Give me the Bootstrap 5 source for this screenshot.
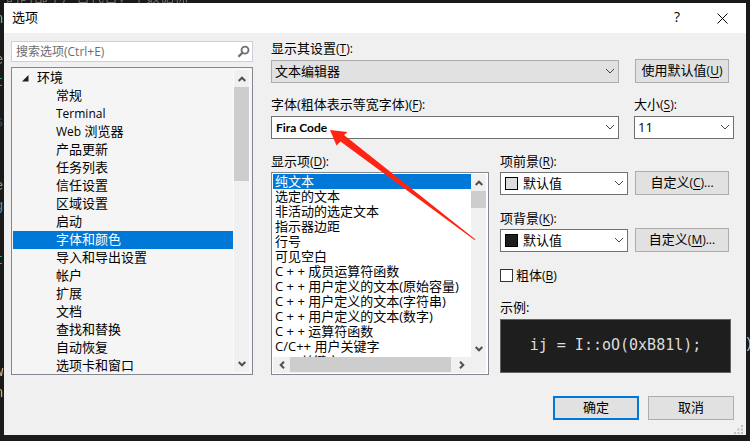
<!DOCTYPE html>
<html lang="zh-CN">
<head>
<meta charset="utf-8">
<meta name="viewport" content="width=device-width, initial-scale=1">
<title>选项</title>
<link href="https://cdn.jsdelivr.net/npm/bootstrap@5.3.0/dist/css/bootstrap.min.css" rel="stylesheet">
<style>
  :root { --ui: "Open Sans", "Noto Sans CJK SC", sans-serif; }
  body { background: #1a1a1a; font-family: var(--ui); font-size: 13px; line-height: 18px; color: #000; min-height: 100vh; overflow: hidden; }
  .latin { font-size: 12px; }
  .backdrop { font: 14px/18px "Liberation Mono", "Noto Sans CJK SC", monospace; color: #6e6e6e; overflow: hidden; }
  .backdrop span { position: absolute; left: -5px; white-space: nowrap; }
  .dialog { margin: 3px 4px 6px; background: #f0f0f0; }
  .titlebar { height: 30px; background: #fff; padding: 0 18px 2px 8px; }
  .titlebar h1 { font-size: 13px; line-height: 18px; margin: 0; font-weight: 400; }
  .titlebar button, .bar button { border: 0; background: transparent; padding: 0; line-height: 1; }
  .tools { gap: 37px; font-size: 14px; }
  .content-grid { display: grid; grid-template-columns: minmax(0, 242fr) minmax(0, 463fr); column-gap: 18px; padding: 8px 12px 0 7px; }
  .settings { margin-top: -2px; }
  .search { border: 1px solid #cccedb; background: #fff; height: 21px; padding: 0 2px 0 4px; }
  .search input { border: 0; background: transparent; padding: 0; outline: 0; font-size: 12px; line-height: 18px; color: #6d6d6d; }
  .search input::placeholder { color: #6d6d6d; opacity: 1; }
  .tree { border: 1px solid #828790; background: #f5f5f5; margin-top: 5px; height: 308px; padding: 1px 2px 1px 1px; }
  .tree ul, .items ul { min-width: 0; overflow: hidden; margin: 0; padding: 0; list-style: none; }
  .tree li { height: 18px; line-height: 16px; padding-left: 43px; white-space: nowrap; }
  .tree li.parent { padding-left: 9px; }
  .tree li.parent svg { margin-right: 8px; }
  .tree li.active, .items li.active { background: #0078d7; color: #fff; }
  .bar { width: 17px; background: #f0f0f0; border: 1px solid #fbfbfb; flex: none; }
  .bar button, .hbar button { width: 15px; height: 17px; display: grid; place-items: center; flex: none; }
  .thumb { background: #cdcdcd; }
  .tree .thumb { height: 94px; }
  .items .bar { border: 0; width: 15px; }
  .items .bar .thumb { height: 17px; }
  .field-label { display: block; margin: 0; height: 18px; }
  .field-label u, .push u { text-underline-offset: 2px; }
  .combo { position: relative; }
  .combo select { appearance: none; width: 100%; height: 23px; display: block; border: 1px solid #707070; border-radius: 0; background: #fff; padding: 0 20px 2px 3px; line-height: 18px; color: #000; font-size: 13px; }
  .combo.muted-combo select { border-color: #adadad; background: #e1e1e1; }
  .combo select.font-name { font: 700 12px/18px Lato, sans-serif; padding: 0 20px 0 4px; }
  .combo svg { position: absolute; right: 4px; top: 8px; pointer-events: none; }
  .combo.with-swatch select { padding-left: 22px; }
  .swatch { position: absolute; left: 5px; top: 5px; width: 13px; height: 13px; border: 1px solid #000; background: #dcdcdc; pointer-events: none; }
  .swatch.dark { background: #1e1e1e; }
  .push { border: 1px solid #adadad; border-radius: 0; background: #e1e1e1; height: 24px; padding: 0 0 2px; font-size: 13px; line-height: 18px; color: #000; white-space: nowrap; }
  .push:hover { border-color: #0078d7; background: #e5f1fb; }
  .push.primary-push { border: 2px solid #0078d7; }
  .top-row { display: grid; grid-template-columns: minmax(0, 348fr) minmax(0, 100fr); column-gap: 15px; align-items: end; }
  .top-row .field-label { margin-bottom: 3px; }
  .top-row.second { margin: 12px 0 13px; }
  .inset { margin: 0 5px 0 1px; }
  .lower { display: grid; grid-template-columns: minmax(0, 218fr) minmax(0, 234fr); column-gap: 11px; }
  .items { border: 1px solid #828790; background: #fff; height: 203px; padding: 1px 2px 1px 1px; margin-top: 2px; }
  .items li { height: 15px; line-height: 15px; padding-left: 2px; white-space: nowrap; }
  .viewport { height: 183px; }
  .hbar { height: 16px; background: #f0f0f0; }
  .hbar button { width: 17px; height: 15px; border: 0; background: none; padding: 0; }
  .hbar .thumb { height: 15px; flex: 163; }
  .hbar .rest { flex: 2; }
  .pointer-arrow { position: absolute; left: 59px; top: -22px; pointer-events: none; }
  .colour-row { display: grid; grid-template-columns: minmax(0, 128fr) minmax(0, 94fr); column-gap: 7px; margin: 0 5px 0 0; align-items: end; }
  .colour-row .field-label { margin-bottom: 2px; }
  .colour-row.next { margin-top: 14px; }
  .check { gap: 3px; margin-top: 14px; height: 18px; }
  .check input { appearance: none; width: 13px; height: 13px; border: 1px solid #333; background: #fff; margin: 0; }
  .check input:checked { background: #0078d7; }
  .sample-label { margin-top: 14px; }
  .preview { margin: 3px 3px 0 0; height: 54px; border: 1px solid #646464; background: #1e1e1e; color: #dcdcdc; font: 15px/20px "DejaVu Sans Mono", monospace; white-space: pre; overflow: hidden; padding-bottom: 2px; }
  .actions { display: grid; grid-template-columns: 1fr 1fr; column-gap: 9px; width: 24.4%; margin: 21px 12px 0 auto; }
  .grip { padding: 5px 3px 1px 0; line-height: 0; }
</style>
<script src="https://cdn.jsdelivr.net/npm/bootstrap@5.3.0/dist/js/bootstrap.bundle.min.js"></script>
</head>
<body>
<div class="backdrop position-fixed top-0 start-0 w-100 h-100" aria-hidden="true">
  <span style="left:6px;top:-11px">的时部个广告代告，个数据标</span>
  <span style="top:10px;color:#4ec98b">n</span>
  <span style="top:51px;color:#a58a6b">e</span>
  <span style="top:73px;color:#3fae7b">t</span>
  <span style="top:113px;color:#31506b">s</span>
  <span style="top:177px;color:#a58a6b">e</span>
  <span style="top:197px;color:#4f88b5">g</span>
  <span style="top:251px;color:#3fae7b">t</span>
  <span style="top:363px;color:#d9b48a">w</span>
  <span style="top:384px;color:#e3b04b">n</span>
  <span style="left:auto;right:-3px;top:335px;color:#a9c4df">)</span>
</div>
<main class="dialog position-relative" role="dialog" aria-labelledby="dialog-title">
  <header class="titlebar d-flex align-items-center justify-content-between">
    <h1 id="dialog-title">选项</h1>
    <div class="tools d-flex align-items-center">
      <button type="button" aria-label="帮助">?</button>
      <button type="button" aria-label="关闭"><svg width="11" height="11" viewBox="0 0 11 11" stroke="#000" fill="none"><path d="M.5.5l10 10M10.500.5l-10 10"/></svg></button>
    </div>
  </header>

  <div class="content-grid">
    <section>
      <div class="search d-flex align-items-center">
        <input class="flex-grow-1 w-100" type="search" aria-label="搜索选项" placeholder="搜索选项(Ctrl+E)">
        <svg width="14" height="14" viewBox="0 0 14 14" fill="none" stroke="#717171"><circle cx="8.500" cy="5" r="3.700" stroke-width="2"/><path d="M6 7.500L1.500 12" stroke-width="2.500"/></svg>
      </div>
      <div class="tree d-flex">
        <ul class="flex-grow-1" role="tree">
          <li class="parent" role="treeitem"><svg width="7" height="7" viewBox="0 0 7 7"><path d="M6.500 0v6.500H0z" fill="#1e1e1e"/></svg>环境</li>
          <li role="treeitem">常规</li>
          <li role="treeitem"><span class="latin">Terminal</span></li>
          <li role="treeitem"><span class="latin">Web</span> 浏览器</li>
          <li role="treeitem">产品更新</li>
          <li role="treeitem">任务列表</li>
          <li role="treeitem">信任设置</li>
          <li role="treeitem">区域设置</li>
          <li role="treeitem">启动</li>
          <li class="active" role="treeitem" aria-selected="true">字体和颜色</li>
          <li role="treeitem">导入和导出设置</li>
          <li role="treeitem">帐户</li>
          <li role="treeitem">扩展</li>
          <li role="treeitem">文档</li>
          <li role="treeitem">查找和替换</li>
          <li role="treeitem">自动恢复</li>
          <li role="treeitem">选项卡和窗口</li>
        </ul>
        <div class="bar d-flex flex-column">
          <button type="button" aria-label="向上滚动"><svg width="8" height="6" viewBox="0 0 8 6" fill="none" stroke="#505050" stroke-width="2"><path d="M.7 5L4 1.700 7.300 5"/></svg></button>
          <div class="thumb"></div>
          <button class="mt-auto" type="button" aria-label="向下滚动"><svg width="8" height="6" viewBox="0 0 8 6" fill="none" stroke="#505050" stroke-width="2"><path d="M.7 1L4 4.300 7.300 1"/></svg></button>
        </div>
      </div>
    </section>

    <section class="settings">
      <div class="top-row">
        <div>
          <label class="field-label" for="scope">显示其设置<span class="latin">(<u>T</u>):</span></label>
          <div class="combo muted-combo">
            <select id="scope"><option>文本编辑器</option></select>
            <svg width="10" height="7" viewBox="0 0 10 7" fill="none" stroke="#444"><path d="M1 1l4 4 4-4"/></svg>
          </div>
        </div>
        <button class="push inset" type="button">使用默认值<span class="latin">(<u>U</u>)</span></button>
      </div>
      <div class="top-row second">
        <div>
          <label class="field-label" for="font">字体(粗体表示等宽字体)<span class="latin">(<u>F</u>):</span></label>
          <div class="combo">
            <select id="font" class="font-name"><option>Fira Code</option></select>
            <svg width="10" height="7" viewBox="0 0 10 7" fill="none" stroke="#444"><path d="M1 1l4 4 4-4"/></svg>
          </div>
        </div>
        <div>
          <label class="field-label" for="size">大小<span class="latin">(<u>S</u>):</span></label>
          <div class="combo">
            <select id="size"><option>11</option></select>
            <svg width="10" height="7" viewBox="0 0 10 7" fill="none" stroke="#444"><path d="M1 1l4 4 4-4"/></svg>
          </div>
        </div>
      </div>

      <div class="lower">
        <div class="position-relative">
          <div class="field-label" id="items-label">显示项<span class="latin">(<u>D</u>):</span></div>
          <div class="items">
            <div class="viewport d-flex">
              <ul class="flex-grow-1" role="listbox" aria-labelledby="items-label">
                <li class="active" role="option" aria-selected="true">纯文本</li>
                <li role="option">选定的文本</li>
                <li role="option">非活动的选定文本</li>
                <li role="option">指示器边距</li>
                <li role="option">行号</li>
                <li role="option">可见空白</li>
                <li role="option">C + + 成员运算符函数</li>
                <li role="option">C + + 用户定义的文本(原始容量)</li>
                <li role="option">C + + 用户定义的文本(字符串)</li>
                <li role="option">C + + 用户定义的文本(数字)</li>
                <li role="option">C + + 运算符函数</li>
                <li role="option">C/C++ 用户关键字</li>
                <li role="option">CSS 关键字</li>
              </ul>
              <div class="bar d-flex flex-column">
                <button type="button" aria-label="向上滚动"><svg width="8" height="6" viewBox="0 0 8 6" fill="none" stroke="#505050" stroke-width="2"><path d="M.7 5L4 1.700 7.300 5"/></svg></button>
                <div class="thumb"></div>
                <button class="mt-auto" type="button" aria-label="向下滚动"><svg width="8" height="6" viewBox="0 0 8 6" fill="none" stroke="#505050" stroke-width="2"><path d="M.7 1L4 4.300 7.300 1"/></svg></button>
              </div>
            </div>
            <div class="hbar d-flex">
              <button type="button" aria-label="向左滚动"><svg width="6" height="8" viewBox="0 0 6 8" fill="none" stroke="#505050" stroke-width="2"><path d="M5 .7L1.700 4 5 7.300"/></svg></button>
              <div class="thumb"></div><div class="rest"></div>
              <button class="me-3" type="button" aria-label="向右滚动"><svg width="6" height="8" viewBox="0 0 6 8" fill="none" stroke="#505050" stroke-width="2"><path d="M1 .7L4.300 4 1 7.300"/></svg></button>
            </div>
          </div>
          <svg class="pointer-arrow" width="146" height="110" viewBox="0 0 146 110"><path d="M0 0L17.500 2 14 5 145.500 109.500 144.500 110 10.500 11.500 6.500 15.500z" fill="#fe2312"/></svg>
        </div>

        <div>
          <div class="colour-row">
            <div>
              <label class="field-label" for="fg">项前景<span class="latin">(<u>R</u>):</span></label>
              <div class="combo with-swatch">
                <select id="fg"><option>默认值</option></select>
                <span class="swatch"></span>
                <svg width="10" height="7" viewBox="0 0 10 7" fill="none" stroke="#444"><path d="M1 1l4 4 4-4"/></svg>
              </div>
            </div>
            <button class="push" type="button">自定义<span class="latin">(<u>C</u>)...</span></button>
          </div>
          <div class="colour-row next">
            <div>
              <label class="field-label" for="bg">项背景<span class="latin">(<u>K</u>):</span></label>
              <div class="combo with-swatch">
                <select id="bg"><option>默认值</option></select>
                <span class="swatch dark"></span>
                <svg width="10" height="7" viewBox="0 0 10 7" fill="none" stroke="#444"><path d="M1 1l4 4 4-4"/></svg>
              </div>
            </div>
            <button class="push" type="button">自定义<span class="latin">(<u>M</u>)...</span></button>
          </div>
          <div class="check d-flex align-items-center">
            <input type="checkbox" id="bold">
            <label for="bold" class="field-label">粗体<span class="latin">(<u>B</u>)</span></label>
          </div>
          <div class="sample-label">示例:</div>
          <div class="preview d-flex align-items-center justify-content-center">ij = I::oO(0xB81l);</div>
        </div>
      </div>
    </section>
  </div>

  <div class="actions">
    <button class="push primary-push" type="button">确定</button>
    <button class="push" type="button">取消</button>
  </div>
  <div class="grip text-end"><svg width="9" height="9" viewBox="0 0 9 9" fill="#bdbdbd"><path d="M7 0h2v2H7zM3.500 3.500h2v2h-2zM7 3.500h2v2H7zM0 7h2v2H0zM3.500 7h2v2h-2zM7 7h2v2H7z"/></svg></div>
</main>
</body>
</html>
